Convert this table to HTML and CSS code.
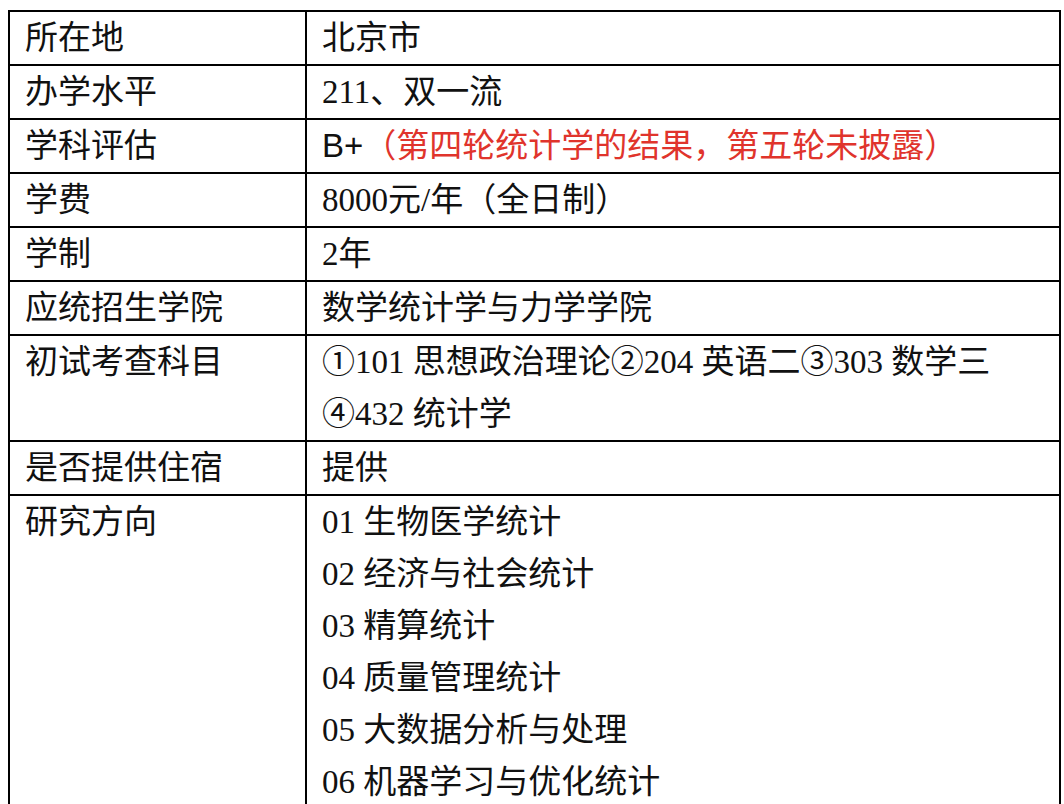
FILE: index.html
```html
<!DOCTYPE html>
<html lang="zh-CN">
<head>
<meta charset="utf-8">
<title>院校信息</title>
<link rel="stylesheet" href="styles.css">
</head>
<body>
<table class="info">
  <colgroup>
    <col class="col-label">
    <col class="col-value">
  </colgroup>
  <tbody>
    <tr><td class="label">所在地</td><td class="value">北京市</td></tr>
    <tr><td class="label">办学水平</td><td class="value">211、双一流</td></tr>
    <tr><td class="label">学科评估</td><td class="value"><span class="sans">B+</span><span class="red">（第四轮统计学的结果，第五轮未披露）</span></td></tr>
    <tr><td class="label">学费</td><td class="value">8000元/年（全日制）</td></tr>
    <tr><td class="label">学制</td><td class="value">2年</td></tr>
    <tr><td class="label">应统招生学院</td><td class="value">数学统计学与力学学院</td></tr>
    <tr><td class="label">初试考查科目</td><td class="value">①101 思想政治理论②204 英语二③303 数学三<br>④432 统计学</td></tr>
    <tr><td class="label">是否提供住宿</td><td class="value">提供</td></tr>
    <tr><td class="label">研究方向</td><td class="value">01 生物医学统计<br>02 经济与社会统计<br>03 精算统计<br>04 质量管理统计<br>05 大数据分析与处理<br>06 机器学习与优化统计</td></tr>
  </tbody>
</table>
</body>
</html>
```

FILE: styles.css
```css
html, body {
  background: #ffffff;
}
body {
  margin: 10px 0 0 8px;
  color: #111111;
}
.info {
  border-collapse: collapse;
  width: 1053px;
  table-layout: fixed;
}
.col-label {
  width: 297px;
}
.info td {
  border: 2px solid #000000;
  padding: 0 8px 0 15px;
  vertical-align: top;
  font-size: 33px;
  line-height: 52px;
  white-space: nowrap;
  font-family: "Liberation Serif", "Noto Sans CJK SC", serif;
}
.sans {
  font-family: "Liberation Sans", "Noto Sans CJK SC", sans-serif;
}
.red {
  color: #e0342c;
}
```
